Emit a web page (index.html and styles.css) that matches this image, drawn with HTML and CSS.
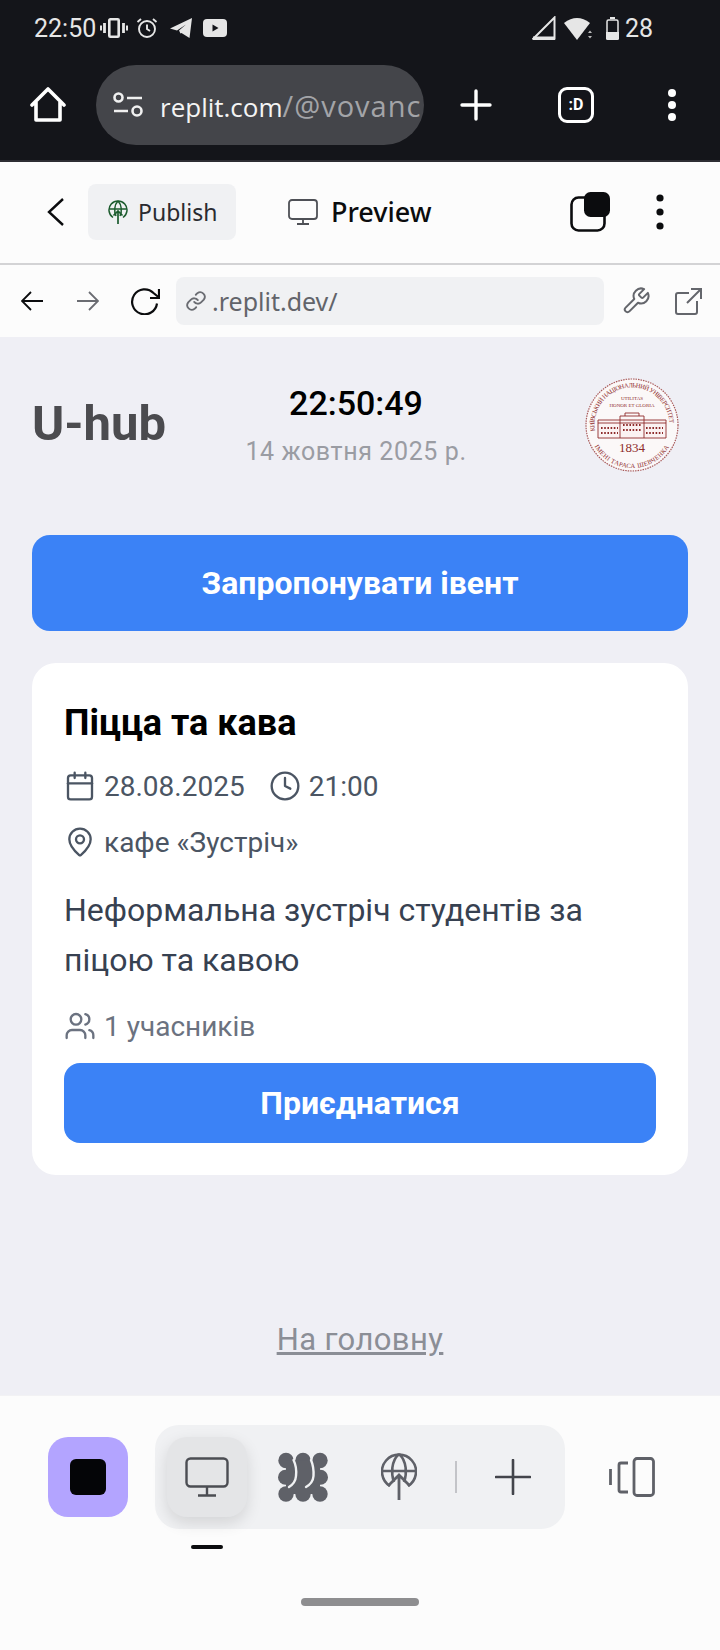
FILE: index.html
```html
<!DOCTYPE html>
<html lang="uk">
<head>
  <meta charset="UTF-8">
  <title>U-hub</title>
  <link rel="stylesheet" href="styles.css">
</head>
<body>

  <!-- phone status bar + browser toolbar -->
  <div class="browser">
    <div class="status">
      <span class="clock-time">22:50</span>
      <svg class="ic-vibrate" width="28" height="20" viewBox="0 0 28 20" fill="none" stroke="#e6e6e6"><rect x="9.300" y="1.300" width="9.400" height="17.400" rx="1" stroke-width="2.600"/><path d="M4.500 5v10M23.500 5v10" stroke-width="2.800"/><path d="M1 7.500v5M27 7.500v5" stroke-width="2"/></svg>
      <svg class="ic-alarm" width="22" height="22" viewBox="0 0 22 22" fill="none" stroke="#e6e6e6" stroke-width="1.900"><circle cx="11" cy="12" r="8"/><path d="M11 7.500V12l3 2M1.500 5 5 2M20.500 5 17 2"/></svg>
      <svg class="ic-telegram" width="22" height="20" viewBox="0 0 22 20"><path d="M0 10.500 22 0l-2.500 20-8-5-1 .500-1.500-3 7-6-9 6z" fill="#e6e6e6"/></svg>
      <svg class="ic-youtube" width="24" height="18" viewBox="0 0 24 18"><rect width="24" height="18" rx="4" fill="#e6e6e6"/><path d="M9.500 5.500v7l6-3.500z" fill="#14151a"/></svg>
      <span class="status-right">
        <svg width="24" height="24" viewBox="0 0 24 24" fill="none"><path d="M1.500 22.500 22.500 1.500v21z" stroke="#e6e6e6" stroke-width="2"/><path d="M1 20.500h22V24H1z" fill="#e6e6e6"/></svg>
        <svg class="ic-wifi" width="28" height="24" viewBox="0 0 28 24"><path d="M0 7Q13-3 26 7L13 24z" fill="#e6e6e6"/><path d="M24 17h4l-2-2.500zM24 20h4l-2 2.500z" fill="#bbb"/></svg>
        <svg class="ic-battery" width="13" height="23" viewBox="0 0 13 23"><path d="M4 0h5v2H4z" fill="#e6e6e6"/><rect x="1" y="3" width="11" height="19" rx="1.500" fill="none" stroke="#e6e6e6" stroke-width="1.500"/><path d="M0 15h13v6.500a1.500 1.500 0 0 1-1.500 1.500h-10A1.500 1.500 0 0 1 0 21.500z" fill="#e6e6e6"/></svg>
        <span class="battery-num">28</span>
      </span>
    </div>

    <div class="toolbar">
      <svg class="ic-home" width="36" height="36" viewBox="0 0 36 36" fill="none" stroke="#fff" stroke-width="3.600" stroke-linejoin="round" stroke-linecap="round"><path d="M2 18 18 2l16 16M6 15v18h24V15"/></svg>
      <div class="omnibox">
        <svg width="30" height="26" viewBox="0 0 30 26" fill="none" stroke="#f0f0f0" stroke-width="2.600"><circle cx="5.500" cy="5.500" r="4"/><path d="M14 6h15M1 19h14"/><circle cx="24" cy="19" r="4.500"/></svg>
        <span class="omni-text">replit.com<span class="omni-path">/@vovanc</span></span>
      </div>
      <svg class="ic-plus" width="32" height="32" viewBox="0 0 32 32" stroke="#fff" stroke-width="3.400" stroke-linecap="round"><path d="M16 2v28M2 16h28"/></svg>
      <div class="tabs-box">:D</div>
      <svg class="ic-dots" width="8" height="32" viewBox="0 0 8 32" fill="#fff"><circle cx="4" cy="4" r="4"/><circle cx="4" cy="16" r="4"/><circle cx="4" cy="28" r="4"/></svg>
    </div>
  </div>

  <!-- replit header -->
  <div class="replit-head">
    <svg class="ic-back" width="18" height="30" viewBox="0 0 18 30" fill="none" stroke="#0b0c0e" stroke-width="2.400"><path d="M16 2 2 15l14 13"/></svg>
    <div class="publish">
      <svg width="20" height="24" viewBox="0 0 20 24" fill="none" stroke="#1c5c2e" stroke-width="1.500"><path d="M5 17.500A9 9 0 1 1 15 17.500"/><path d="M1.500 9h17M10 1C6 5 6 12 8 16M10 1c4 4 4 11 2 15"/><path d="M10 24V11M5.500 15.500 10 11l4.500 4.500" stroke-width="1.700"/></svg>
      <span>Publish</span>
    </div>
    <svg class="ic-monitor" width="30" height="26" viewBox="0 0 30 26" fill="none" stroke="#4e5056" stroke-width="1.800"><rect x="1" y="1" width="28" height="19" rx="3"/><path d="M15 20v5M9 25h12"/></svg>
    <span class="preview">Preview</span>
    <svg class="ic-stack" width="40" height="40" viewBox="0 0 40 40"><rect x="1.500" y="5.500" width="33" height="33" rx="7" fill="none" stroke="#0b0c0e" stroke-width="2.600"/><rect x="14" y="0" width="26" height="25" rx="6.500" fill="#0b0c0e"/></svg>
    <svg class="ic-dots2" width="8" height="36" viewBox="0 0 8 36" fill="#0b0c0e"><circle cx="4" cy="4" r="3.600"/><circle cx="4" cy="18" r="3.600"/><circle cx="4" cy="32" r="3.600"/></svg>
  </div>

  <!-- preview url bar -->
  <div class="urlbar">
    <svg class="ic-nav" width="22" height="22" viewBox="0 0 22 22" fill="none" stroke="#0b0c0e" stroke-width="1.800"><path d="M22 11H1M10 2l-9 9 9 9"/></svg>
    <svg class="ic-nav ic-fwd" width="22" height="22" viewBox="0 0 22 22" fill="none" stroke="#6a6c72" stroke-width="1.800"><path d="M0 11h21M12 2l9 9-9 9"/></svg>
    <svg class="ic-reload" width="30" height="27" viewBox="0 0 30 27" fill="none" stroke="#0b0c0e" stroke-width="2.200"><path d="M27 15.500a12.500 12.500 0 1 1-3.500-10.500L29 9.500"/><path d="M29 1v9h-9"/></svg>
    <div class="urlfield">
      <svg width="22" height="22" viewBox="0 0 24 24" fill="none" stroke="#6a6c72" stroke-width="2" stroke-linecap="round"><path d="M10 13a5 5 0 0 0 7.500.5l3-3a5 5 0 0 0-7-7l-1.700 1.700"/><path d="M14 11a5 5 0 0 0-7.500-.5l-3 3a5 5 0 0 0 7 7l1.700-1.700"/></svg>
      <span>.replit.dev/</span>
    </div>
    <svg class="ic-wrench" width="30" height="30" viewBox="0 0 24 24" fill="none" stroke="#64666c" stroke-width="1.600" stroke-linejoin="round"><path d="M14.700 6.300a1 1 0 0 0 0 1.400l1.600 1.600a1 1 0 0 0 1.400 0l3.800-3.800a6 6 0 0 1-7.900 7.900l-6.900 6.900a2.100 2.100 0 0 1-3-3l6.900-6.900a6 6 0 0 1 7.900-7.900z"/></svg>
    <svg class="ic-open" width="27" height="27" viewBox="0 0 27 27" fill="none" stroke="#64666c" stroke-width="2"><path d="M14 5H3a2 2 0 0 0-2 2v17a2 2 0 0 0 2 2h17a2 2 0 0 0 2-2V13M12 15 26 1M16 1h10v10"/></svg>
  </div>

  <!-- app -->
  <main class="app">
    <header class="app-head">
      <div class="logo">U-hub</div>
      <div class="datetime">
        <div class="time">22:50:49</div>
        <div class="date">14 жовтня 2025 р.</div>
      </div>
      <svg class="seal" width="94" height="94" viewBox="0 0 94 94">
        <defs>
          <path id="arcTop" d="M10 53A37.500 37.500 0 1 1 84 53"/>
          <path id="arcBot" d="M6 60A43 43 0 0 0 88 60"/>
        </defs>
        <circle cx="47" cy="47" r="46" fill="#fbf8f8" stroke="#a85a5a" stroke-width="1.200" stroke-dasharray="1.500 1"/>
        <text class="seal-ring"><textPath href="#arcTop" textLength="122">КИЇВСЬКИЙ НАЦІОНАЛЬНИЙ УНІВЕРСИТЕТ</textPath></text>
        <text class="seal-ring"><textPath href="#arcBot" startOffset="9" textLength="90">ІМЕНІ ТАРАСА ШЕВЧЕНКА</textPath></text>
        <text class="seal-small" x="47" y="22" text-anchor="middle">UTILITAS</text>
        <text class="seal-small" x="47" y="29" text-anchor="middle">HONOR ET GLORIA</text>
        <path d="M13 42h68v18H13z" fill="#fbf2f2" stroke="#8e2b2b" stroke-width=".9"/>
        <path d="M35 42v-4h24v4M40 38v-3h14v3M13 45h68M35 42v18M59 42v18" fill="none" stroke="#8e2b2b" stroke-width=".9"/>
        <path d="M16 50h17M16 55h17M61 50h17M61 55h17M38 47h18M38 52h18" stroke="#8e2b2b" stroke-width="2" stroke-dasharray="1.600 1.600"/>
        <text class="seal-year" x="47" y="74" text-anchor="middle">1834</text>
      </svg>
    </header>

    <button class="btn btn-propose" type="button">Запропонувати івент</button>

    <section class="card">
      <h2>Піцца та кава</h2>
      <div class="meta-row">
        <span class="meta">
          <svg class="lucide" width="32" height="32" viewBox="0 0 24 24"><path d="M8 2v4M16 2v4"/><rect x="3" y="4" width="18" height="18" rx="2"/><path d="M3 10h18"/></svg>
          28.08.2025
        </span>
        <span class="meta">
          <svg class="lucide" width="32" height="32" viewBox="0 0 24 24"><circle cx="12" cy="12" r="10"/><path d="M12 6v6l4 2"/></svg>
          21:00
        </span>
      </div>
      <div class="meta-row meta-place">
        <span class="meta">
          <svg class="lucide" width="32" height="32" viewBox="0 0 24 24"><path d="M20 10c0 5-5.500 10.200-7.400 11.800a1 1 0 0 1-1.200 0C9.500 20.200 4 15 4 10a8 8 0 0 1 16 0"/><circle cx="12" cy="10" r="3"/></svg>
          кафе «Зустріч»
        </span>
      </div>
      <p class="desc">Неформальна зустріч студентів за піцою та кавою</p>
      <div class="people">
        <svg class="lucide lucide-light" width="32" height="32" viewBox="0 0 24 24"><path d="M16 21v-2a4 4 0 0 0-4-4H6a4 4 0 0 0-4 4v2"/><circle cx="9" cy="7" r="4"/><path d="M22 21v-2a4 4 0 0 0-3-3.870M16 3.130a4 4 0 0 1 0 7.750"/></svg>
        1 учасників
      </div>
      <button class="btn btn-join" type="button">Приєднатися</button>
    </section>

    <a class="home-link" href="#">На головну</a>
  </main>

  <!-- replit bottom dock -->
  <footer class="dock">
    <div class="dock-row">
      <div class="stop"><div class="stop-sq"></div></div>
      <div class="dock-pill">
        <div class="dock-tab active">
          <svg width="44" height="40" viewBox="0 0 44 40" fill="none" stroke="#4b4d53" stroke-width="2.400"><rect x="1.500" y="1.500" width="41" height="28" rx="4"/><path d="M22 30v8M13 38.500h18"/></svg>
        </div>
        <svg class="ic-agent" width="50" height="50" viewBox="0 0 50 50" fill="#5f6168">
          <circle cx="8" cy="8.500" r="7.700"/><circle cx="25" cy="8.500" r="7.700"/><circle cx="42" cy="8.500" r="7.700"/>
          <circle cx="7.500" cy="25.200" r="7.500"/><circle cx="42.500" cy="25.200" r="7.500"/>
          <circle cx="8" cy="42" r="7.700"/><circle cx="25" cy="42" r="7.700"/><circle cx="42" cy="42" r="7.700"/>
          <rect x="8" y="8.500" width="34" height="33.500"/>
          <path d="M15.500 8Q19 15 18 24 17.500 31 11 35M33 8Q36 15 35.500 24 35 31 28 35" fill="none" stroke="#f0f1f3" stroke-width="2.400" stroke-linecap="round"/>
        </svg>
        <svg class="ic-deploy" width="36" height="48" viewBox="0 0 36 48" fill="none" stroke="#5f6168" stroke-width="2.600"><path d="M9 33A17 17 0 1 1 27 33"/><path d="M1 18h34M18 1c-8 7-8 20-5 28M18 1c8 7 8 20 5 28"/><path d="M18 47V22M7 33l11-11 11 11" stroke-width="2.800"/></svg>
        <div class="dock-sep"></div>
        <svg class="ic-dockplus" width="36" height="36" viewBox="0 0 36 36" stroke="#43454b" stroke-width="2.600" stroke-linecap="round"><path d="M18 1v34M1 18h34"/></svg>
      </div>
      <svg class="ic-panes" width="46" height="40" viewBox="0 0 46 40" fill="none" stroke="#5f6168" stroke-width="2.800"><path d="M1.500 12v16"/><path d="M19 6h-7a2 2 0 0 0-2 2v25a2 2 0 0 0 2 2h7"/><rect x="25" y="1.500" width="19.500" height="37" rx="3"/></svg>
    </div>
    <div class="tab-mark"></div>
    <div class="gesture"></div>
  </footer>

</body>
</html>
```

FILE: styles.css
```css
* {
  box-sizing: border-box;
}

body {
  margin: 0;
  width: 720px;
  height: 1650px;
  overflow: hidden;
  font-family: Roboto, sans-serif;
  background: #fcfcfc;
}

svg {
  display: block;
  flex: none;
}

/* browser chrome */
.browser {
  height: 162px;
  background: #14151a;
  border-bottom: 2px solid #2d2d33;
}

.status {
  height: 56px;
  display: flex;
  align-items: center;
  padding: 0 67px 0 34px;
  color: #e6e6e6;
}

.clock-time {
  font-size: 25px;
  width: 66px;
}

.ic-alarm {
  margin-left: 8px;
}

.ic-telegram {
  margin-left: 12px;
}

.ic-youtube {
  margin-left: 11px;
}

.status-right {
  margin-left: auto;
  display: flex;
  align-items: center;
}

.ic-wifi {
  margin-left: 8px;
}

.ic-battery {
  margin-left: 14px;
}

.battery-num {
  font-size: 25px;
  margin-left: 6px;
}

.toolbar {
  height: 104px;
  padding: 0 0 6px 30px;
  display: flex;
  align-items: center;
}

.omnibox {
  width: 328px;
  height: 80px;
  margin-left: 30px;
  padding-left: 17px;
  border-radius: 40px;
  background: #44454a;
  display: flex;
  align-items: center;
  overflow: hidden;
  white-space: nowrap;
}

.omni-text {
  margin-left: 17px;
  font-family: "Open Sans", sans-serif;
  font-size: 26px;
  color: #f4f4f4;
}

.omni-path {
  font-size: 29px;
  letter-spacing: 1px;
  color: #a3a4a8;
}

.ic-plus {
  margin-left: 36px;
}

.tabs-box {
  width: 36px;
  height: 36px;
  margin-left: 66px;
  border: 3px solid #fff;
  border-radius: 9px;
  color: #fff;
  font-size: 16px;
  font-weight: 700;
  text-align: center;
  line-height: 30px;
}

.ic-dots {
  margin-left: 74px;
}

/* replit header */
.replit-head {
  height: 103px;
  padding: 0 0 2px 47px;
  border-bottom: 2px solid #d3d3d5;
  display: flex;
  align-items: center;
}

.publish {
  width: 148px;
  height: 56px;
  margin-left: 23px;
  padding-left: 20px;
  background: #f0f1f3;
  border-radius: 8px;
  display: flex;
  align-items: center;
  gap: 10px;
  font-family: "Noto Sans", sans-serif;
  font-size: 23px;
  color: #2a2b30;
}

.ic-monitor {
  margin-left: 52px;
}

.preview {
  margin-left: 13px;
  font-family: "Noto Sans", sans-serif;
  font-size: 27px;
  font-weight: 500;
  color: #0b0c0e;
}

.ic-stack {
  margin-left: auto;
}

.ic-dots2 {
  margin: 0 56px 0 46px;
}

/* url bar of the preview */
.urlbar {
  height: 72px;
  display: flex;
  align-items: center;
  padding-left: 21px;
}

.ic-fwd {
  margin-left: 34px;
}

.ic-reload {
  margin-left: 31px;
}

.urlfield {
  width: 428px;
  height: 48px;
  margin-left: 16px;
  padding-left: 9px;
  background: #f0f1f3;
  border-radius: 8px;
  display: flex;
  align-items: center;
  gap: 5px;
  font-family: "Noto Sans", sans-serif;
  font-size: 25px;
  color: #62646a;
}

.ic-wrench {
  margin-left: 17px;
}

.ic-open {
  margin-left: 24px;
}

/* app */
.app {
  height: 1058px;
  padding: 0 32px;
  background: #efeff5;
  display: flex;
  flex-direction: column;
}

.app-head {
  height: 198px;
  display: flex;
  align-items: flex-start;
}

.logo {
  width: 180px;
  margin-top: 59px;
  font-size: 49px;
  font-weight: 700;
  line-height: 56px;
  color: #4b4b4f;
}

.datetime {
  width: 288px;
  text-align: center;
  margin-top: 44px;
}

.time {
  font-size: 34px;
  font-weight: 500;
  line-height: 44px;
  color: #000;
}

.date {
  margin-top: 7px;
  font-size: 25px;
  letter-spacing: .6px;
  line-height: 40px;
  color: #9a9ca3;
}

.seal {
  margin: 41px 0 0 85px;
}

.seal-ring {
  font-family: "Liberation Serif", serif;
  font-size: 6.500px;
  fill: #8e2b2b;
}

.seal-small {
  font-family: "Liberation Serif", serif;
  font-size: 5px;
  fill: #8e2b2b;
}

.seal-year {
  font-family: "Liberation Serif", serif;
  font-size: 13px;
  fill: #8e2b2b;
}

.btn {
  display: block;
  width: 100%;
  border: none;
  background: #3b82f6;
  color: #fff;
  font-family: Roboto, sans-serif;
  font-weight: 700;
  font-size: 32px;
  cursor: pointer;
}

.btn-propose {
  height: 96px;
  border-radius: 18px;
}

.card {
  height: 512px;
  margin-top: 32px;
  padding: 32px;
  background: #fff;
  border-radius: 24px;
}

.card h2 {
  margin: 0;
  font-size: 36px;
  font-weight: 700;
  line-height: 56px;
  color: #000;
}

.meta-row {
  display: flex;
  gap: 24px;
  margin-top: 15px;
  height: 40px;
}

.meta-place {
  margin-top: 16px;
}

.meta {
  display: flex;
  align-items: center;
  gap: 8px;
  font-size: 28px;
  color: #4b5563;
}

.lucide {
  fill: none;
  stroke: #4b5563;
  stroke-width: 1.750;
  stroke-linecap: round;
  stroke-linejoin: round;
}

.lucide-light {
  stroke: #6b7280;
}

.desc {
  margin: 23px 0 0;
  font-size: 32px;
  line-height: 50px;
  color: #374151;
}

.people {
  display: flex;
  align-items: center;
  gap: 8px;
  height: 40px;
  margin-top: 21px;
  font-size: 28px;
  color: #6b7280;
}

.btn-join {
  height: 80px;
  margin-top: 17px;
  border-radius: 16px;
}

.home-link {
  align-self: center;
  margin-top: 141px;
  font-size: 31px;
  line-height: 48px;
  letter-spacing: .4px;
  color: #8b8e96;
}

/* bottom dock */
.dock {
  height: 255px;
  background: #fcfcfc;
  border-top: 1px solid #f2f2f4;
}

.dock-row {
  display: flex;
  align-items: center;
  height: 104px;
  margin-top: 29px;
  padding-left: 48px;
}

.stop {
  width: 80px;
  height: 80px;
  border-radius: 20px;
  background: #b3a4ff;
  display: flex;
  align-items: center;
  justify-content: center;
}

.stop-sq {
  width: 36px;
  height: 36px;
  border-radius: 6px;
  background: #040507;
}

.dock-pill {
  width: 410px;
  height: 104px;
  margin-left: 27px;
  padding-left: 12px;
  background: #f0f1f3;
  border-radius: 24px;
  display: flex;
  align-items: center;
}

.dock-tab {
  width: 80px;
  height: 80px;
  border-radius: 20px;
  display: flex;
  align-items: center;
  justify-content: center;
}

.dock-tab.active {
  background: #e4e5e7;
  box-shadow: 0 6px 16px rgba(0, 0, 0, .12);
}

.ic-agent {
  margin-left: 31px;
}

.ic-deploy {
  margin-left: 53px;
}

.dock-sep {
  width: 2px;
  height: 32px;
  margin-left: 38px;
  background: #c3c4c8;
}

.ic-dockplus {
  margin-left: 38px;
}

.ic-panes {
  margin-left: 44px;
}

.tab-mark {
  width: 32px;
  height: 4px;
  margin: 16px 0 0 191px;
  border-radius: 2px;
  background: #0b0c0e;
}

.gesture {
  width: 118px;
  height: 8px;
  margin: 49px 0 0 301px;
  border-radius: 4px;
  background: #8e8e90;
}
```
